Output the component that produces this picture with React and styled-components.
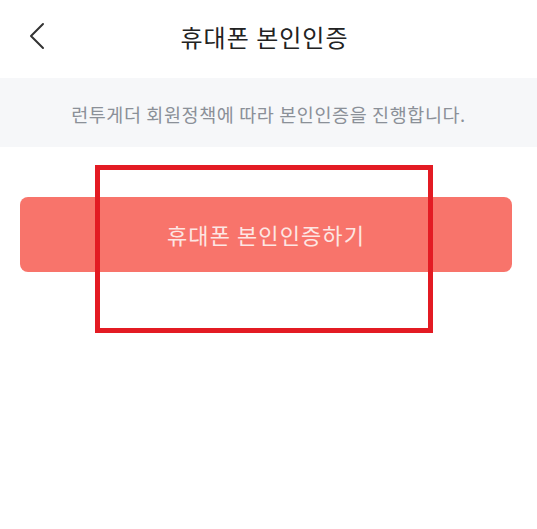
import React from "react";
import styled, { createGlobalStyle } from "styled-components";

const Global = createGlobalStyle`
  html, body { margin: 0; padding: 0; background: #ffffff; }
  body { font-family: "Noto Sans CJK KR", "Noto Sans", sans-serif; }
  * { box-sizing: border-box; }
`;

const Page = styled.div`
  position: relative;
  width: 537px;
  min-height: 529px;
  background: #ffffff;
`;

const Header = styled.header`
  height: 78px;
  display: grid;
  grid-template-columns: 60px 1fr 60px;
  align-items: center;
  background: #ffffff;
`;

const BackButton = styled.button`
  border: 0;
  background: none;
  padding: 0 0 0 28px;
  height: 40px;
  display: flex;
  align-items: center;
  cursor: pointer;
  transform: translateY(-3px);
`;

const Title = styled.h1`
  margin: 0;
  text-align: center;
  font-size: 24px;
  font-weight: 400;
  color: #222222;
  letter-spacing: 1px;
  transform: translate(-4px, -3px);
`;

const Notice = styled.div`
  height: 69px;
  background: #f6f7f9;
  display: flex;
  align-items: center;
  justify-content: center;
  font-size: 18.5px;
  color: #8b9098;
  letter-spacing: 0.6px;
  padding-top: 2px;
`;

const Content = styled.main`
  padding: 50px 25px 0 20px;
`;

const PrimaryButton = styled.button`
  width: 100%;
  height: 75px;
  border: 0;
  border-radius: 8px;
  background: #f8746b;
  color: #fde6e3;
  font-family: "Noto Sans CJK KR", "Noto Sans", sans-serif;
  font-size: 22px;
  font-weight: 400;
  letter-spacing: 1.1px;
  cursor: pointer;
  padding-bottom: 2px;
`;

const Highlight = styled.div`
  position: absolute;
  left: 95px;
  top: 165px;
  width: 338px;
  height: 168px;
  border: 5px solid #e31b23;
  pointer-events: none;
`;

export default function App() {
  return (
    <>
      <Global />
      <Page>
        <Header>
          <BackButton aria-label="뒤로">
            <svg width="18" height="28" viewBox="0 0 18 28" fill="none">
              <path d="M15 2 L3 14 L15 26" stroke="#333" strokeWidth="2" strokeLinecap="round" strokeLinejoin="round" />
            </svg>
          </BackButton>
          <Title>휴대폰 본인인증</Title>
          <span />
        </Header>
        <Notice>런투게더 회원정책에 따라 본인인증을 진행합니다.</Notice>
        <Content>
          <PrimaryButton>휴대폰 본인인증하기</PrimaryButton>
        </Content>
        <Highlight />
      </Page>
    </>
  );
}
